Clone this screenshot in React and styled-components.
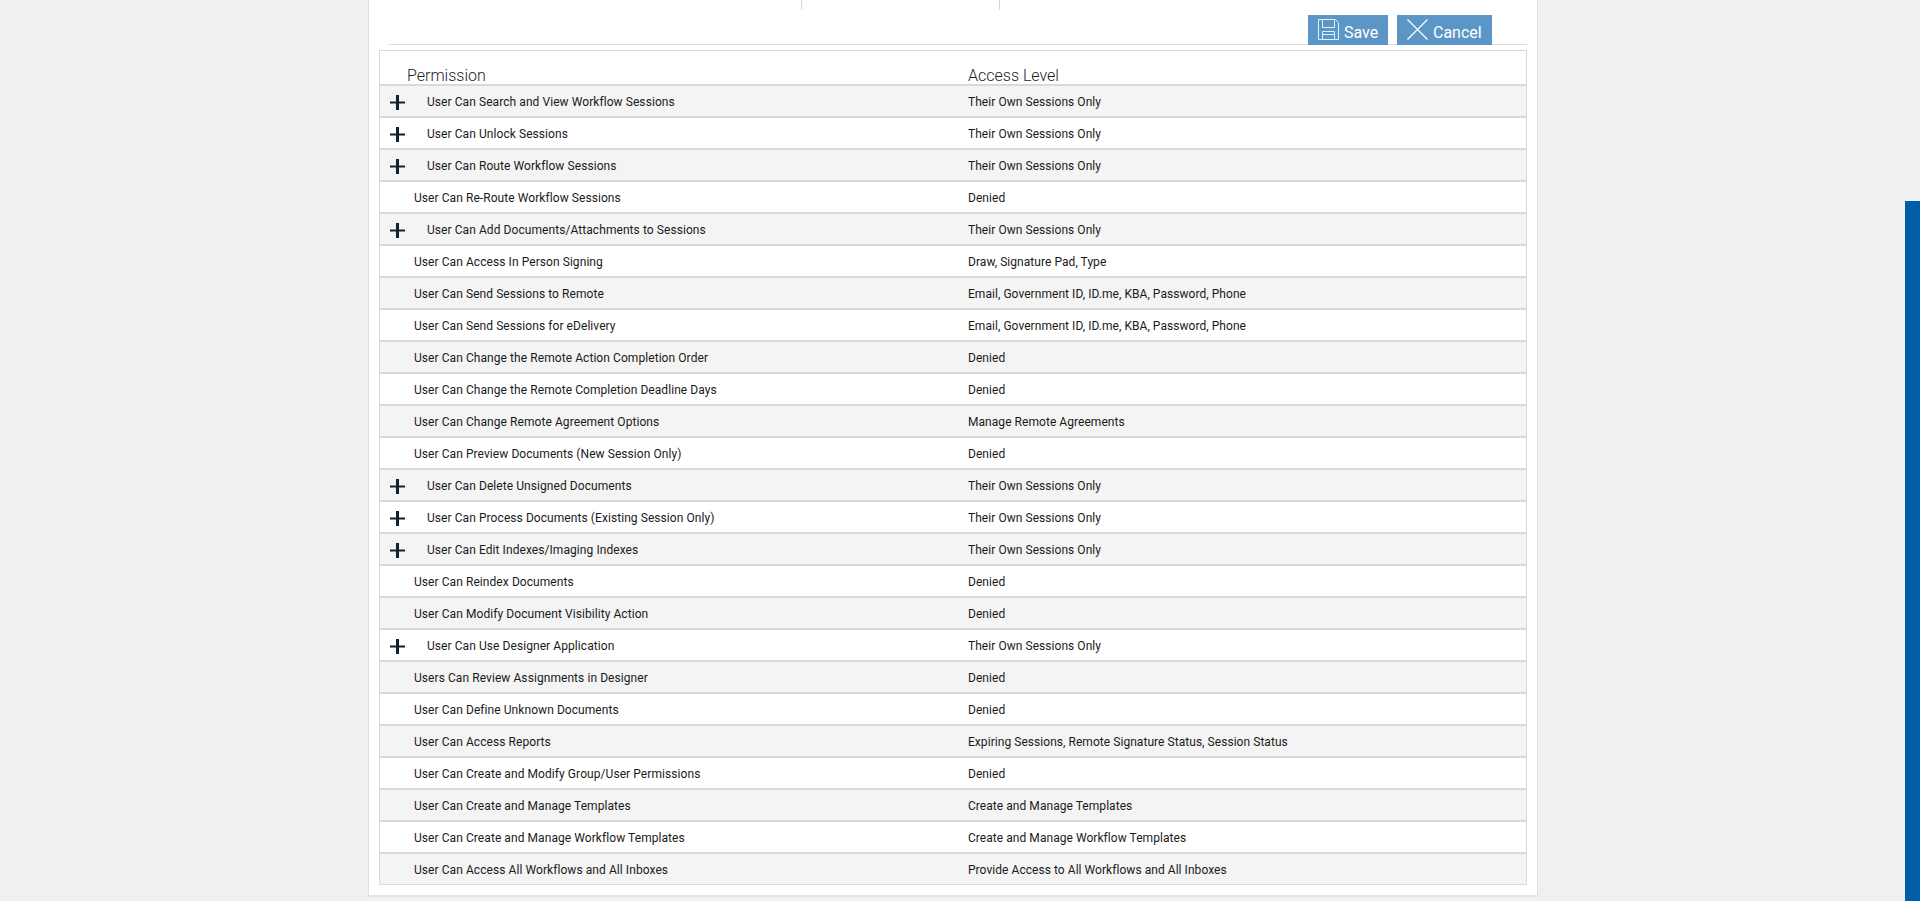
import React from "react";
import styled, { createGlobalStyle } from "styled-components";

const GlobalStyle = createGlobalStyle`
  html, body {
    margin: 0;
    padding: 0;
    height: 901px;
    overflow: hidden;
    background: #f0f0f0;
    font-family: Roboto, "Liberation Sans", sans-serif;
  }
`;

const Page = styled.div`
  display: flex;
  height: 901px;
`;

const Main = styled.div`
  flex: 1;
  display: flex;
  justify-content: center;
  padding-left: 1px;
`;

const Scrollbar = styled.div`
  width: 15px;
  padding-top: 201px;
  box-sizing: border-box;
`;

const ScrollThumb = styled.div`
  height: 700px;
  background: #005ea8;
`;

const Panel = styled.div`
  width: 1170px;
  height: 897px;
  box-sizing: border-box;
  background: #fff;
  border-left: 1px solid #e0e0e0;
  border-right: 1px solid #e0e0e0;
  border-bottom: 2px solid #e3e3e3;
  padding: 0 10px;
`;

const TabStub = styled.div`
  display: flex;
  height: 10px;
  padding-left: 422px;
`;

const TabDivider = styled.div`
  width: 197px;
  height: 10px;
  border-left: 1px solid #d8d8d8;
  &:last-child {
    width: 1px;
  }
`;

const Toolbar = styled.div`
  display: flex;
  justify-content: flex-end;
  align-items: flex-start;
  gap: 9px;
  height: 29px;
  margin: 5px 0 0 10px;
  padding-right: 35px;
  box-shadow: 0 1px 0 #dedede;
`;

const ActionButton = styled.button`
  display: flex;
  align-items: center;
  flex: none;
  height: 30px;
  width: ${props => props.$width}px;
  padding: 0 0 0 10px;
  border: 0;
  background: #5b96c6;
  color: #fff;
  font-family: Roboto, sans-serif;
  font-size: 17px;
  box-sizing: border-box;
  overflow: hidden;
`;

const ButtonIcon = styled.svg`
  width: 21px;
  height: 21px;
  margin: 0 5px 2px 0;
  flex: none;
`;

const ButtonLabel = styled.span`
  display: block;
  margin-top: 4px;
  transform: scaleX(0.94);
  transform-origin: left center;
`;

const Table = styled.div`
  margin-top: 6px;
  border: 1px solid #d9d9d9;
`;

const HeadRow = styled.div`
  display: grid;
  grid-template-columns: 561px 1fr;
  height: 33px;
  box-sizing: border-box;
  padding: 16px 0 0 27px;
  color: #1c1c1c;
  font-size: 16px;
  font-weight: 300;
  line-height: 17px;
`;

const Row = styled.div`
  display: grid;
  grid-template-columns: 588px 1fr;
  align-items: center;
  height: 32px;
  box-sizing: border-box;
  padding-top: 2px;
  border-top: 2px solid #d9d9d9;
  background: ${props => (props.$odd ? "#f4f4f4" : "#fff")};
  color: #1a1a1a;
  font-size: 12px;
  letter-spacing: 0.07px;
`;

const Name = styled.div`
  display: flex;
  align-items: center;
  padding-left: ${props => (props.$expandable ? "10px" : "34px")};
`;

const Access = styled.span`
  letter-spacing: 0.05px;
`;

const Plus = styled.svg`
  width: 15px;
  height: 15px;
  margin-right: 22px;
  flex: none;
`;

const SaveIcon = () => (
  <ButtonIcon viewBox="0 0 21 21" fill="none" stroke="#dff1fb" strokeWidth="1">
    <path d="M.5.5H17.5L20.5 3.5V20.5H.5Z" />
    <path d="M4.5.5V8.5H16.5V.5" />
    <path d="M4.5 20.5V12.5H16.5V20.5M4.5 15.5H16.5" />
  </ButtonIcon>
);

const CancelIcon = () => (
  <ButtonIcon viewBox="0 0 21 21" fill="none" stroke="#fff" strokeWidth="1.2">
    <path d="M.5.5L20.5 20.5M20.5.5L.5 20.5" />
  </ButtonIcon>
);

const OWN = "Their Own Sessions Only";
const VERIFY = "Email, Government ID, ID.me, KBA, Password, Phone";

const permissions = [
  ["User Can Search and View Workflow Sessions", OWN, true],
  ["User Can Unlock Sessions", OWN, true],
  ["User Can Route Workflow Sessions", OWN, true],
  ["User Can Re-Route Workflow Sessions", "Denied"],
  ["User Can Add Documents/Attachments to Sessions", OWN, true],
  ["User Can Access In Person Signing", "Draw, Signature Pad, Type"],
  ["User Can Send Sessions to Remote", VERIFY],
  ["User Can Send Sessions for eDelivery", VERIFY],
  ["User Can Change the Remote Action Completion Order", "Denied"],
  ["User Can Change the Remote Completion Deadline Days", "Denied"],
  ["User Can Change Remote Agreement Options", "Manage Remote Agreements"],
  ["User Can Preview Documents (New Session Only)", "Denied"],
  ["User Can Delete Unsigned Documents", OWN, true],
  ["User Can Process Documents (Existing Session Only)", OWN, true],
  ["User Can Edit Indexes/Imaging Indexes", OWN, true],
  ["User Can Reindex Documents", "Denied"],
  ["User Can Modify Document Visibility Action", "Denied"],
  ["User Can Use Designer Application", OWN, true],
  ["Users Can Review Assignments in Designer", "Denied"],
  ["User Can Define Unknown Documents", "Denied"],
  ["User Can Access Reports", "Expiring Sessions, Remote Signature Status, Session Status"],
  ["User Can Create and Modify Group/User Permissions", "Denied"],
  ["User Can Create and Manage Templates", "Create and Manage Templates"],
  ["User Can Create and Manage Workflow Templates", "Create and Manage Workflow Templates"],
  ["User Can Access All Workflows and All Inboxes", "Provide Access to All Workflows and All Inboxes"]
];

export default function App() {
  return (
    <Page>
      <GlobalStyle />
      <Main>
        <Panel>
          <TabStub>
            <TabDivider />
            <TabDivider />
          </TabStub>
          <Toolbar>
            <ActionButton $width={80}>
              <SaveIcon />
              <ButtonLabel>Save</ButtonLabel>
            </ActionButton>
            <ActionButton $width={95}>
              <CancelIcon />
              <ButtonLabel>Cancel</ButtonLabel>
            </ActionButton>
          </Toolbar>
          <Table>
            <HeadRow>
              <span>Permission</span>
              <span>Access Level</span>
            </HeadRow>
            {permissions.map(([name, access, expandable], i) => (
              <Row key={name} $odd={i % 2 === 0}>
                <Name $expandable={expandable}>
                  {expandable && (
                    <Plus viewBox="0 0 15 15">
                      <path d="M0 6.5h15v2H0zM6 0h3v15H6z" fill="#10202c" />
                    </Plus>
                  )}
                  {name}
                </Name>
                <Access>{access}</Access>
              </Row>
            ))}
          </Table>
        </Panel>
      </Main>
      <Scrollbar>
        <ScrollThumb />
      </Scrollbar>
    </Page>
  );
}
